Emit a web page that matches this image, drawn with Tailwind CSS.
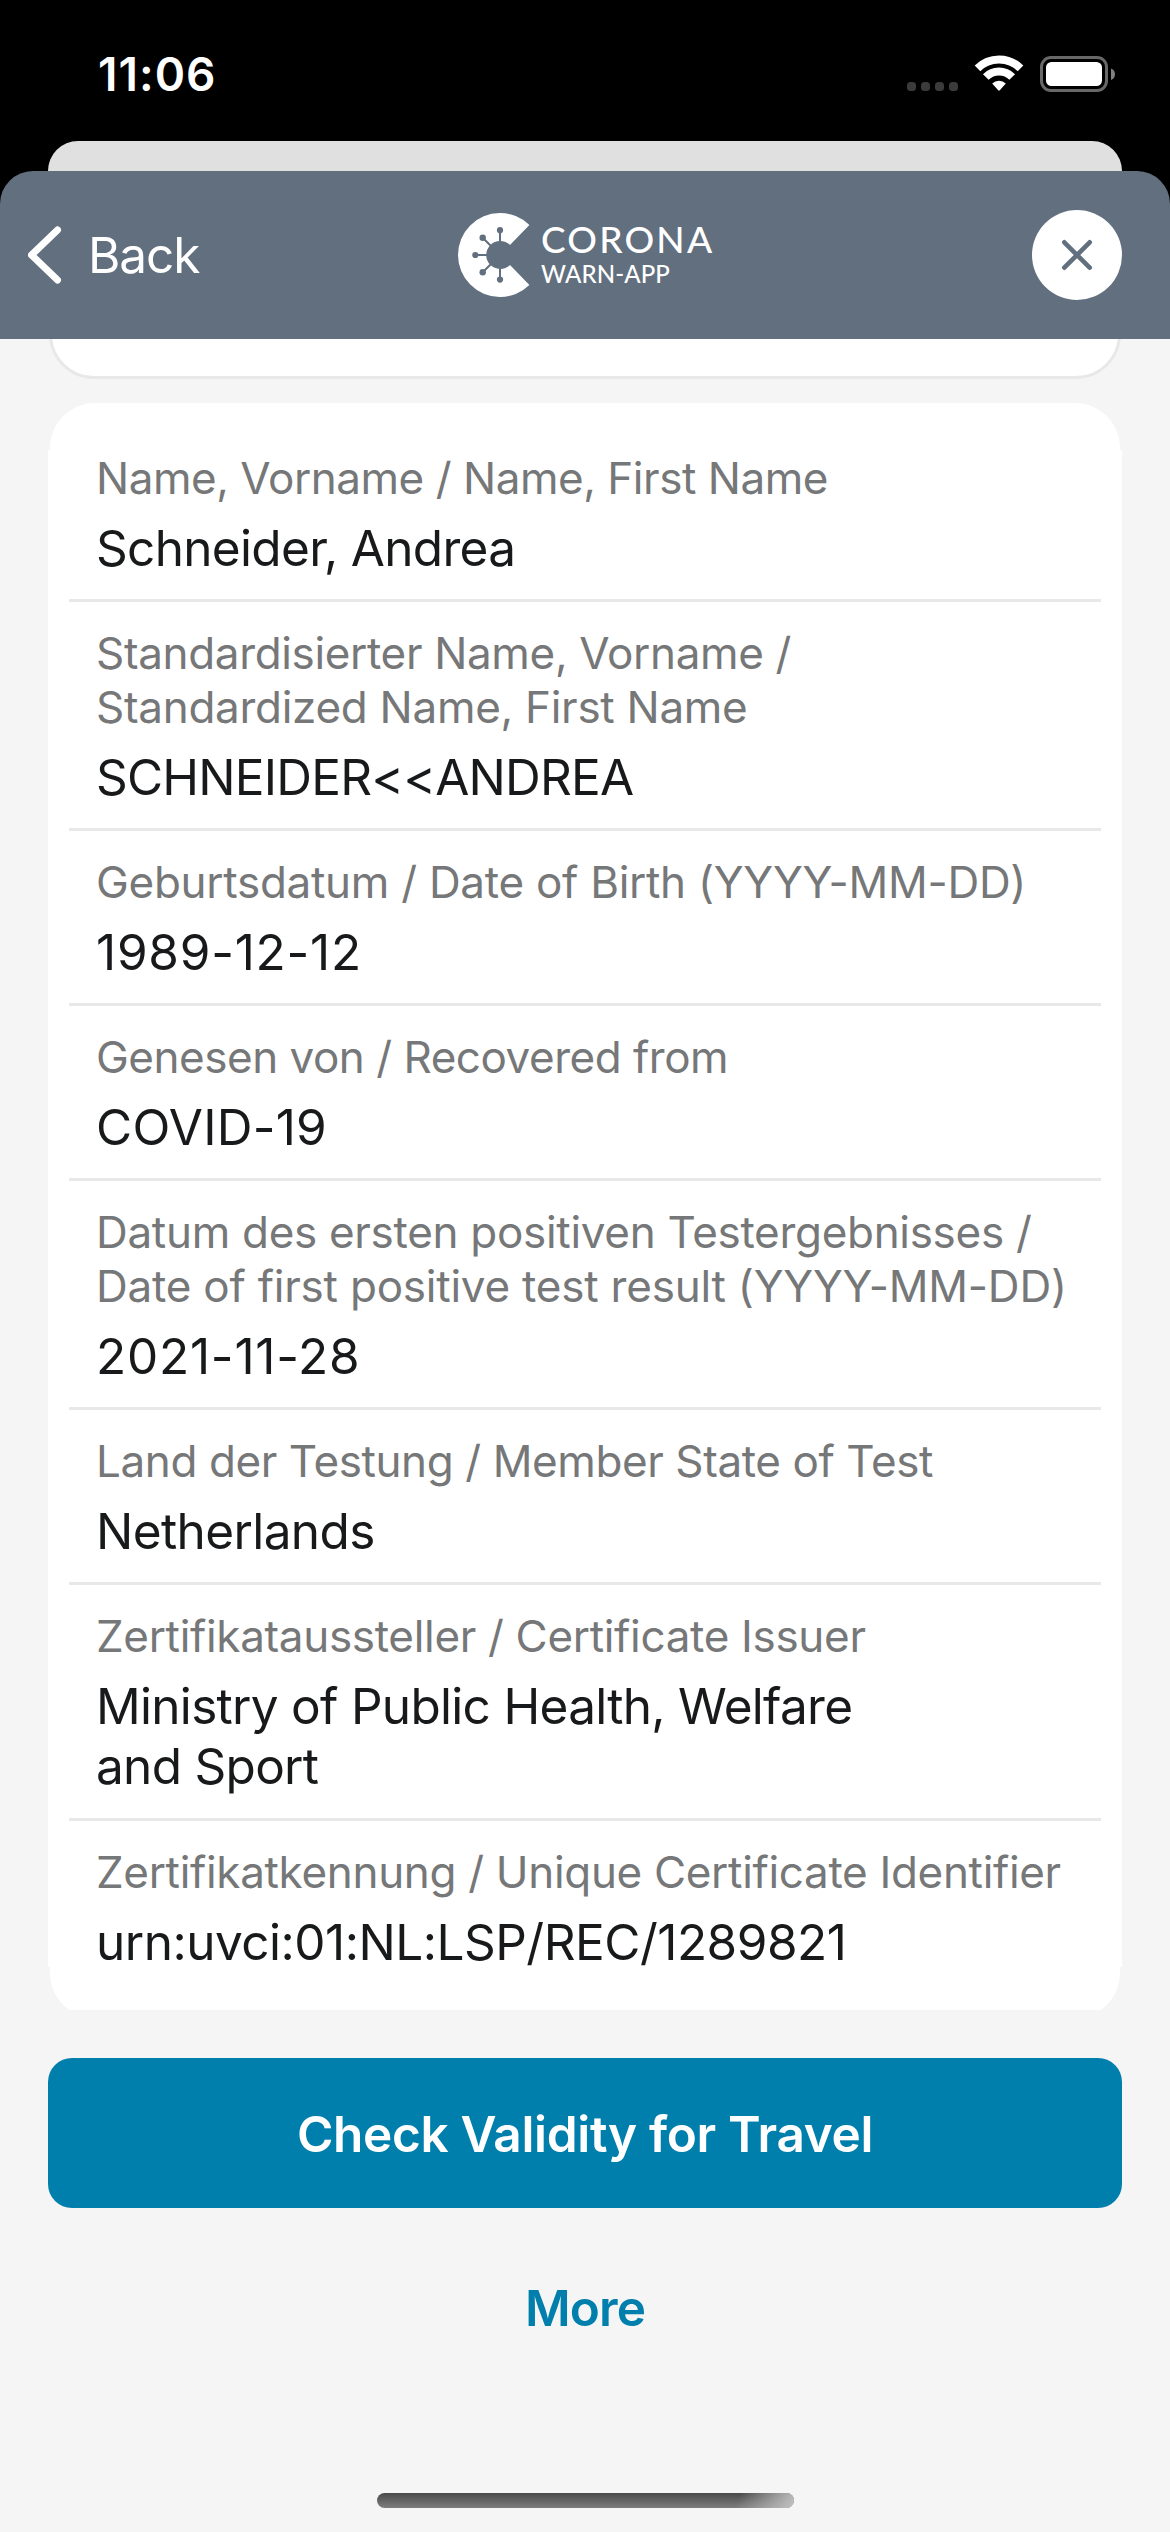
<!DOCTYPE html>
<html lang="en">
<head>
<meta charset="utf-8">
<title>Corona Warn-App</title>
<script src="https://cdn.jsdelivr.net/npm/@tailwindcss/browser@4"></script>
</head>
<body class="w-[1170px] h-[2532px] overflow-hidden bg-[#f5f5f5] font-['Inter',sans-serif] text-[#17191a] flex flex-col">

<div class="bg-black shrink-0">
  <!-- Status bar -->
  <div class="h-[141px] flex items-start justify-between pl-[98px] pr-[55px]">
    <div class="mt-[47px] text-[46px] leading-[54px] font-semibold tracking-[1.02px] text-white">11:06</div>
    <svg class="mt-[50px]" width="210" height="48" viewBox="905 50 210 48">
      <g fill="#3b3b3b">
        <rect x="907" y="82" width="9" height="9" rx="3.5"/>
        <rect x="921" y="82" width="9" height="9" rx="3.5"/>
        <rect x="935" y="82" width="9" height="9" rx="3.5"/>
        <rect x="949" y="82" width="9" height="9" rx="3.5"/>
      </g>
      <g fill="none" stroke="#fff" stroke-width="8">
        <path d="M977.5 68.3A30.5 30.5 0 0 1 1020.5 68.3"/>
        <path d="M985.8 77A18.6 18.6 0 0 1 1012.2 77"/>
      </g>
      <path fill="#fff" d="M992.2 83.6A9.8 9.8 0 0 1 1005.8 83.6L999.8 90.3Q999 91.2 998.2 90.3Z"/>
      <rect x="1041.5" y="57.5" width="65" height="33" rx="9.5" fill="none" stroke="#686868" stroke-width="3"/>
      <rect x="1046" y="62" width="56" height="24" rx="5.5" fill="#fff"/>
      <path fill="#808080" d="M1111 68.5Q1115 70.3 1115 74.2T1111 80Z"/>
    </svg>
  </div>
  <!-- Edge of the sheet underneath -->
  <div class="h-[30px] mx-[48px] bg-[#e0e0e0] rounded-t-[30px]"></div>
  <!-- Navigation bar -->
  <div class="h-[168px] bg-[#616f7e] rounded-t-[33px] grid grid-cols-[458px_1fr_138px] items-center text-white">
    <div class="flex items-center pl-[28px]">
      <svg width="34" height="58" viewBox="0 0 34 58" fill="none" stroke="#fff" stroke-width="7" stroke-linecap="round" stroke-linejoin="round"><path d="M29.5 4L3.5 29L29.5 54"/></svg>
      <span class="ml-[26px] text-[49.5px] leading-[60px] tracking-[-1.09px]">Back</span>
    </div>
    <div class="flex items-center">
      <svg width="72" height="84" viewBox="0 0 72 84">
        <path fill="#fff" d="M71.4 12A42 42 0 1 0 71.4 72L52 52A14 14 0 1 1 52 32Z"/>
        <g fill="#616f7e">
          <circle cx="42" cy="17.2" r="3.1"/><circle cx="42" cy="66.6" r="3.1"/><circle cx="17.3" cy="42" r="3.1"/>
          <circle cx="24.7" cy="24.7" r="3.2"/><circle cx="24.7" cy="59.2" r="3.2"/>
        </g>
        <path stroke="#616f7e" stroke-width="2" d="M42 17V29M42 55V67M17 42H29M24.7 24.7L33 33M24.7 59.2L33 51"/>
      </svg>
      <div class="ml-[11px] -mt-[5px] font-['Lato',sans-serif] font-medium">
        <div class="text-[37px] leading-[42px] tracking-[2.2px]">CORONA</div>
        <div class="text-[24px] leading-[28px] tracking-[0.1px]">WARN-APP</div>
      </div>
    </div>
    <div class="size-[90px] rounded-full bg-white flex items-center justify-center">
      <svg width="32" height="32" viewBox="0 0 32 32" fill="none" stroke="#616f7e" stroke-width="4.6" stroke-linecap="round"><path d="M3.3 3.3L28.7 28.7M28.7 3.3L3.3 28.7"/></svg>
    </div>
  </div>
</div>

<!-- Bottom of the previous card -->
<div class="h-[40px] mx-[49px] shrink-0 overflow-hidden flex flex-col justify-end">
  <div class="h-[120px] shrink-0 bg-white border-[3px] border-[#e8e8e8] rounded-[45px]"></div>
</div>

<!-- Certificate details -->
<main class="mt-[24px] mx-[48px] shrink-0 text-[49.5px] leading-[61px]">
  <div class="h-[47px] mx-[2px] bg-white rounded-t-[45px]"></div>
  <dl class="bg-white px-[21px]">
    <div class="px-[27px] pt-px pb-[20px]">
      <dt class="text-[44px] leading-[54px] text-[#767778] whitespace-nowrap tracking-[-0.46px]">Name, Vorname / Name, First Name</dt>
      <dd class="mt-[13px] tracking-[-0.68px]">Schneider, Andrea</dd>
    </div>
    <div class="px-[27px] pt-[24px] pb-[20px] border-t-[3px] border-[#e8e8e8]">
      <dt class="text-[44px] leading-[54px] text-[#767778] whitespace-nowrap"><span class="tracking-[-0.34px]">Standardisierter Name, Vorname /</span><br><span class="tracking-[-0.28px]">Standardized Name, First Name</span></dt>
      <dd class="mt-[13px] tracking-[-0.79px]">SCHNEIDER&lt;&lt;ANDREA</dd>
    </div>
    <div class="px-[27px] pt-[24px] pb-[20px] border-t-[3px] border-[#e8e8e8]">
      <dt class="text-[44px] leading-[54px] text-[#767778] whitespace-nowrap tracking-[-0.28px]">Geburtsdatum / Date of Birth (YYYY-MM-DD)</dt>
      <dd class="mt-[13px] tracking-[0.76px]">1989-12-12</dd>
    </div>
    <div class="px-[27px] pt-[24px] pb-[20px] border-t-[3px] border-[#e8e8e8]">
      <dt class="text-[44px] leading-[54px] text-[#767778] whitespace-nowrap tracking-[-0.48px]">Genesen von / Recovered from</dt>
      <dd class="mt-[13px] tracking-[0.23px]">COVID-19</dd>
    </div>
    <div class="px-[27px] pt-[24px] pb-[20px] border-t-[3px] border-[#e8e8e8]">
      <dt class="text-[44px] leading-[54px] text-[#767778] whitespace-nowrap"><span class="tracking-[-0.3px]">Datum des ersten positiven Testergebnisses /</span><br><span class="tracking-[-0.22px]">Date of first positive test result (YYYY-MM-DD)</span></dt>
      <dd class="mt-[13px] tracking-[0.78px]">2021-11-28</dd>
    </div>
    <div class="px-[27px] pt-[24px] pb-[20px] border-t-[3px] border-[#e8e8e8]">
      <dt class="text-[44px] leading-[54px] text-[#767778] whitespace-nowrap tracking-[-0.4px]">Land der Testung / Member State of Test</dt>
      <dd class="mt-[13px] tracking-[-0.6px]">Netherlands</dd>
    </div>
    <div class="px-[27px] pt-[24px] pb-[22px] border-t-[3px] border-[#e8e8e8]">
      <dt class="text-[44px] leading-[54px] text-[#767778] whitespace-nowrap tracking-[-0.32px]">Zertifikataussteller / Certificate Issuer</dt>
      <dd class="mt-[13px] leading-[60px] tracking-[-0.7px]">Ministry of Public Health, Welfare<br>and Sport</dd>
    </div>
    <div class="h-[149px] px-[27px] pt-[24px] border-t-[3px] border-[#e8e8e8]">
      <dt class="text-[44px] leading-[54px] text-[#767778] whitespace-nowrap tracking-[-0.32px]">Zertifikatkennung / Unique Certificate Identifier</dt>
      <dd class="mt-[13px] tracking-[-0.5px]">urn:uvci:01:NL:LSP/REC/1289821</dd>
    </div>
  </dl>
  <div class="h-[43px] mx-[2px] overflow-hidden">
    <div class="h-[51px] bg-white rounded-b-[45px]"></div>
  </div>
</main>

<!-- Actions -->
<div class="mt-[48px] mx-[48px] shrink-0 flex flex-col text-[49.5px] font-semibold text-center">
  <button class="h-[150px] pt-[2px] rounded-[24px] bg-[#007fad] text-white tracking-[-0.33px]">Check Validity for Travel</button>
  <button class="mt-[25px] h-[150px] text-[#007fad] tracking-[-0.9px]">More</button>
</div>

<!-- Home indicator -->
<div class="mt-auto mb-[24px] mx-auto shrink-0 w-[417px] h-[15px] rounded-full overflow-hidden bg-linear-to-b from-[#4a4a4a] to-[#7e7e7e]">
  <div class="ml-auto w-[64px] h-full bg-linear-[110deg] from-transparent from-15% to-[#c2c2c2]"></div>
</div>
</body>
</html>
